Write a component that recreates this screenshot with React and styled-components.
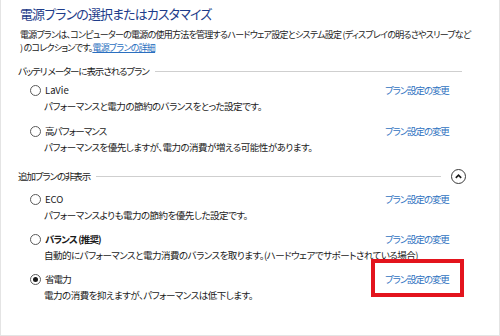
import React from 'react';
import styled, { createGlobalStyle, css } from 'styled-components';

const GlobalStyle = createGlobalStyle`
  html, body {
    margin: 0;
    padding: 0;
    background: #ffffff;
  }
  body {
    font-family: "Noto Sans CJK JP", "Noto Sans", sans-serif;
    font-feature-settings: "palt";
    color: #1a1a1a;
  }
`;

const Frame = styled.div`
  width: 500px;
  height: 336px;
  box-sizing: border-box;
  border: 1px solid #e4e4e4;
  border-top: none;
  padding: 5px 37px 0 19px;
  display: flex;
  flex-direction: column;
  overflow: hidden;
`;

const Title = styled.h1`
  margin: 0;
  font-size: 13px;
  line-height: 18px;
  font-weight: 400;
  color: #1e3c8a;
  letter-spacing: -0.9px;
`;

const Intro = styled.p`
  margin: 5px 0 0;
  font-size: 9px;
  line-height: 13px;
  letter-spacing: -0.75px;
  white-space: nowrap;
`;

const InlineLink = styled.a`
  color: #2a6fc0;
  text-decoration: underline;
`;

const SectionHeader = styled.div`
  display: flex;
  align-items: center;
  gap: 6px;
  margin-top: ${(p) => p.$top}px;
  margin-left: -2px;
  height: 14px;
  font-size: 9.5px;
  letter-spacing: -1.1px;
  white-space: nowrap;
`;

const Rule = styled.div`
  flex: 1;
  height: 1px;
  background: #cfcfcf;
`;

const CollapseButton = styled.button`
  width: 15px;
  height: 15px;
  padding: 0;
  margin-left: 4px;
  margin-right: -4px;
  border: 1.2px solid #3a3a3a;
  border-radius: 50%;
  background: #fff;
  display: flex;
  align-items: center;
  justify-content: center;
`;

const PlanList = styled.div`
  display: flex;
  flex-direction: column;
  gap: ${(p) => p.$gap}px;
  margin-top: ${(p) => p.$top}px;
  padding-left: 10px;
`;

const Plan = styled.div`
  display: grid;
  grid-template-columns: 1fr 77px;
  row-gap: 2px;
`;

const PlanName = styled.label`
  display: flex;
  align-items: center;
  gap: 3px;
  height: 14px;
  font-size: 9.5px;
  letter-spacing: ${(p) => (p.$latin ? '0px' : '-0.9px')};
  font-weight: ${(p) => (p.$bold ? 700 : 400)};
  white-space: nowrap;
`;

const Radio = styled.span`
  width: 11px;
  height: 11px;
  margin-right: 1px;
  box-sizing: border-box;
  border: 1px solid #5a5a5a;
  border-radius: 50%;
  display: flex;
  align-items: center;
  justify-content: center;
  flex-shrink: 0;

  ${(p) =>
    p.$checked &&
    css`
      &::after {
        content: '';
        width: 5px;
        height: 5px;
        border-radius: 50%;
        background: #1a1a1a;
      }
    `}
`;

const PlanDesc = styled.div`
  grid-column: 1 / -1;
  padding-left: 14px;
  height: 14px;
  line-height: 14px;
  font-size: 9.5px;
  letter-spacing: -0.5px;
  white-space: nowrap;
`;

const ChangeLink = styled.a`
  position: relative;
  height: 14px;
  line-height: 14px;
  font-size: 9.5px;
  letter-spacing: -1.1px;
  color: #2f72bf;
  white-space: nowrap;

  ${(p) =>
    p.$highlight &&
    css`
      &::after {
        content: '';
        position: absolute;
        left: -14px;
        top: -13px;
        width: 93px;
        height: 38px;
        box-sizing: border-box;
        border: 4px solid #e3141d;
      }
    `}
`;

const Chevron = () => (
  <svg width="9" height="9" viewBox="0 0 10 10">
    <path d="M2 6.5 L5 3.5 L8 6.5" fill="none" stroke="#1a1a1a" strokeWidth="1.8" />
  </svg>
);

const batteryPlans = [
  { name: 'LaVie', latin: true, desc: 'パフォーマンスと電力の節約のバランスをとった設定です。' },
  { name: '高パフォーマンス', desc: 'パフォーマンスを優先しますが、電力の消費が増える可能性があります。' },
];

const extraPlans = [
  { name: 'ECO', latin: true, desc: 'パフォーマンスよりも電力の節約を優先した設定です。' },
  {
    name: 'バランス (推奨)',
    bold: true,
    desc: '自動的にパフォーマンスと電力消費のバランスを取ります。(ハードウェアでサポートされている場合)',
  },
  { name: '省電力', checked: true, highlight: true, desc: '電力の消費を抑えますが、パフォーマンスは低下します。' },
];

const PlanRow = ({ plan }) => (
  <Plan>
    <PlanName $bold={plan.bold} $latin={plan.latin}>
      <Radio $checked={plan.checked} />
      {plan.name}
    </PlanName>
    <ChangeLink $highlight={plan.highlight}>プラン設定の変更</ChangeLink>
    <PlanDesc>{plan.desc}</PlanDesc>
  </Plan>
);

const App = () => (
  <>
    <GlobalStyle />
    <Frame>
      <Title>電源プランの選択またはカスタマイズ</Title>
      <Intro>
        電源プランは、コンピューターの電源の使用方法を管理するハードウェア設定とシステム設定 (ディスプレイの明るさやスリープなど
        <br />
        ) のコレクションです。<InlineLink>電源プランの詳細</InlineLink>
      </Intro>

      <SectionHeader $top={10}>
        バッテリ メーターに表示されるプラン
        <Rule />
      </SectionHeader>
      <PlanList $top={5} $gap={11}>
        {batteryPlans.map((p) => (
          <PlanRow key={p.name} plan={p} />
        ))}
      </PlanList>

      <SectionHeader $top={15}>
        追加プランの非表示
        <Rule />
        <CollapseButton>
          <Chevron />
        </CollapseButton>
      </SectionHeader>
      <PlanList $top={9} $gap={10}>
        {extraPlans.map((p) => (
          <PlanRow key={p.name} plan={p} />
        ))}
      </PlanList>
    </Frame>
  </>
);

export default App;
